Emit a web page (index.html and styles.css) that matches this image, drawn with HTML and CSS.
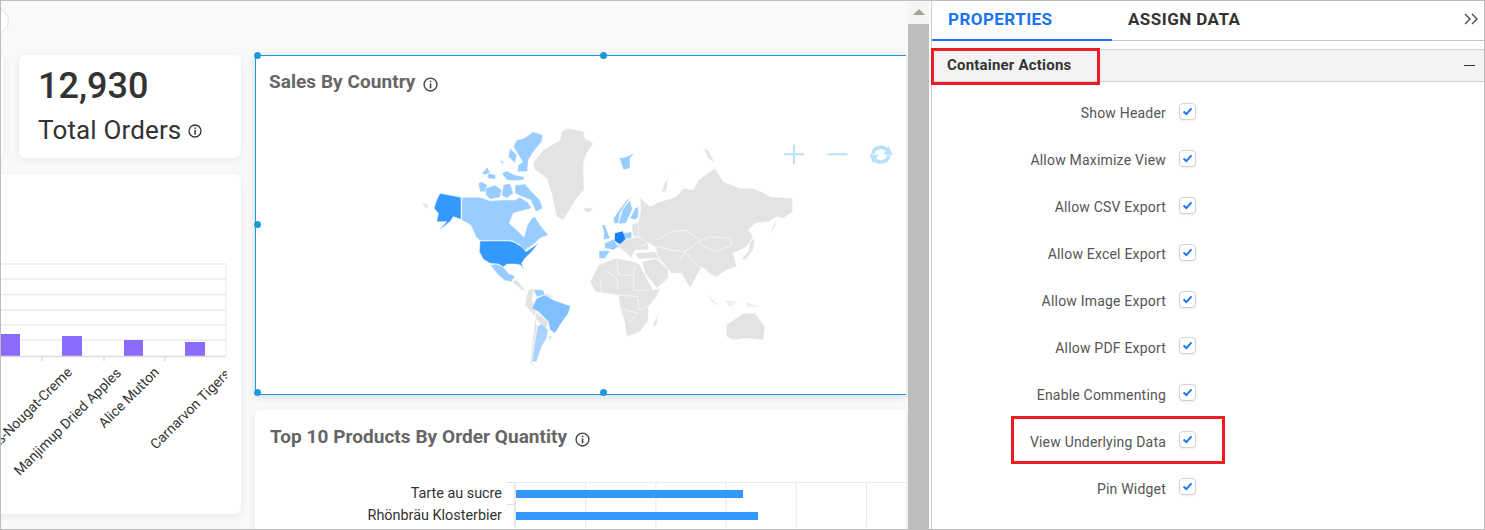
FILE: index.html
```html
<!DOCTYPE html>
<html lang="en">

<head>
  <meta charset="UTF-8">
  <title>Dashboard designer</title>
  <link rel="stylesheet" href="styles.css">
</head>

<body>
  <svg class="defs" width="0" height="0">
    <symbol id="info" viewBox="0 0 14 14">
      <circle cx="7" cy="7" r="6" fill="none" stroke="currentColor" stroke-width="1.3" />
      <rect x="6.3" y="6" width="1.5" height="4.6" fill="currentColor" />
      <rect x="6.3" y="3.4" width="1.5" height="1.5" fill="currentColor" />
    </symbol>
    <symbol id="tick" viewBox="0 0 17 17">
      <path d="M4 8.600 L7.200 11.400 L13 5" fill="none" stroke="#1a73f0" stroke-width="2.200" />
    </symbol>
  </svg>

  <div class="app">
    <div class="canvas">
      <span class="zoom-knob"></span>

      <div class="col-left">
        <div class="kpi-row">
          <div class="card kpi-stub"></div>
          <div class="card kpi">
            <div class="kpi-value">12,930</div>
            <div class="kpi-label">Total Orders <svg class="info-sm"><use href="#info" /></svg></div>
          </div>
        </div>

        <div class="card column-card">
          <svg class="column-chart" width="227" height="240" viewBox="0 250 227 240">
            <g stroke="#eaeaea" stroke-width="1.5">
              <path d="M0 264H226M0 279H226M0 294.500H226M0 310H226M0 325H226M0 340H226" />
              <path d="M226 264V356" stroke-width="1" />
            </g>
            <g fill="#8a6bfd">
              <rect x="1" y="334" width="19" height="22" />
              <rect x="62" y="336" width="20" height="20" />
              <rect x="124" y="340" width="19" height="16" />
              <rect x="185" y="342" width="20" height="14" />
            </g>
            <path d="M0 356.500H226M42 356V361M104 356V361M165 356V361" stroke="#dcdcdc" stroke-width="1.500" fill="none" />
            <g class="axis-label">
              <text transform="translate(73 373) rotate(-45)" text-anchor="end">NuNuCa Nuß-Nougat-Creme</text>
              <text transform="translate(122 374) rotate(-45)" text-anchor="end">Manjimup Dried Apples</text>
              <text transform="translate(160 373) rotate(-45)" text-anchor="end">Alice Mutton</text>
              <text transform="translate(156 450) rotate(-45)">Carnarvon Tigers</text>
            </g>
          </svg>
        </div>
      </div>

      <div class="col-right">
        <div class="card widget widget-selected">
          <h2 class="widget-title">Sales By Country <svg class="info"><use href="#info" /></svg></h2>
          <svg class="map" width="500" height="270" viewBox="0 0 1500 810">
            <g fill="#e3e3e3" stroke="#fff" stroke-width="1.500" stroke-linejoin="round">
              <polygon points="505,55 550,65 555,85 580,100 560,130 550,160 552,240 530,265 490,330 470,320 462,285 455,250 440,205 405,180 398,160 430,120 480,90 485,65" />
              <polygon points="65,275 85,285 80,300" />
              <polygon points="550,295 580,292 570,307 555,305" />
              <polygon points="720,262 750,290 780,275 830,260 850,235 880,240 895,210 945,175 970,215 1020,235 1060,235 1115,260 1178,265 1178,305 1150,325 1130,320 1105,335 1065,340 1045,360 1060,380 1040,410 1000,430 1010,470 980,480 950,500 935,495 905,470 870,535 845,490 815,490 790,460 775,445 765,410 745,400 700,385 695,345 715,335 722,300" />
              <polygon points="648,395 672,388 715,380 745,400 745,420 705,420 695,440 705,455 680,430 660,415 648,410" />
              <polygon points="705,430 765,425 778,445 715,447" />
              <polygon points="725,455 770,445 805,480 805,505 770,535 735,490" />
              <polygon points="785,245 795,215 832,185 805,205 798,245" />
              <polygon points="910,115 925,120 945,160 925,145" />
              <polygon points="1108,375 1132,318 1125,350" />
              <polygon points="1050,395 1065,385 1060,420 1035,450 1025,445 1045,425" />
              <polygon points="570,515 595,465 645,445 705,455 720,465 735,495 760,540 780,535 770,560 745,590 745,630 720,665 680,680 675,640 660,590 655,555 615,550 585,545" />
              <polygon points="760,640 775,612 770,645 758,650" />
              <polygon points="978,645 1030,610 1065,610 1095,650 1090,690 1040,685 1000,690 980,680" />
              <polygon points="335,515 350,510 375,540 385,545 365,540" />
              <polygon points="385,540 400,535 400,555 395,570 410,595 405,620 375,585 378,565" />
              <polygon points="437,548 462,560 440,565" />
              <polygon points="410,605 445,635 440,655 420,640 405,625" />
              <polygon points="405,625 412,650 405,690 395,755 405,770 390,760 398,690" />
              <polygon points="445,675 458,680 448,692" />
            </g>
            <g fill="#eeeeee">
              <polygon points="925,555 945,575 960,590 935,575" />
              <polygon points="975,570 1010,575 990,590" />
              <polygon points="1040,575 1075,590 1040,590" />
            </g>
            <g fill="none" stroke="#fff" stroke-width="2">
              <polygon points="895,395 930,380 990,385 995,405 950,425 910,410" />
              <path d="M770 390 815 365 855 360 900 390M770 410 815 420 855 425 905 480M840 450 855 425M855 425 895 395" />
              <path d="M615 480 650 505 655 540M650 450 655 495 700 495 705 465M700 495 700 540 745 540M655 555 715 560 715 600 745 590M675 600 715 610 685 640M600 505 605 550" />
              <path d="M700 385 715 380 715 335M745 400 720 410" />
            </g>
            <g fill="#99ccff" stroke="#fff" stroke-width="1.500" stroke-linejoin="round">
              <polygon points="400,65 428,75 425,95 400,125 385,150 382,185 352,185 355,165 368,155 340,110 350,90 372,85" />
              <polygon points="330,115 350,135 345,160 325,140" />
              <polygon points="185,262 240,262 270,272 300,270 345,270 360,262 385,278 395,295 375,300 340,310 328,340 350,360 372,382 382,345 395,325 405,320 420,345 445,375 420,385 405,400 370,425 360,405 335,392 240,392 228,380 212,345 185,330" />
              <polygon points="245,190 262,172 270,188 255,195" />
              <polygon points="265,190 288,195 285,208 262,205" />
              <polygon points="235,220 245,215 262,225 255,245 240,245" />
              <polygon points="255,235 285,225 305,240 300,262 270,268 258,255" />
              <polygon points="310,225 330,220 340,250 320,265 305,255" />
              <polygon points="305,190 320,183 345,195 372,200 372,210 340,212 320,210" />
              <polygon points="345,225 375,222 395,245 420,270 428,295 408,305 392,270 370,262 345,250" />
              <polygon points="298,150 310,155 310,165" />
              <polygon points="658,145 680,140 705,128 690,145 690,175 670,180" />
              <polygon points="270,465 290,462 310,470 325,490 345,498 335,515 315,512 295,495" />
              <polygon points="400,538 430,540 435,555 410,560" />
              <polygon points="667,370 695,365 695,385 670,388" />
              <polygon points="613,400 640,388 655,410 640,420 615,415" />
              <polygon points="655,342 668,298 690,270 697,298 678,340" />
              <polygon points="640,325 680,270 713,252 685,270 660,310 655,340 642,340" />
              <polygon points="690,325 705,295 715,290 715,320 705,330" />
              <polygon points="605,345 615,345 630,385 610,390 612,368" />
              <polygon points="597,422 630,422 615,445 597,445" />
            </g>
            <polygon points="425,640 445,660 440,685 425,710 410,755 395,755 405,690 412,650" fill="#aad4ff" stroke="#fff" stroke-width="1.500" />
            <polygon points="410,565 435,555 460,570 512,588 505,610 480,645 465,670 450,660 445,635 415,605 395,595" fill="#80bfff" stroke="#fff" stroke-width="1.500" />
            <g fill="#3399ff" stroke="#fff" stroke-width="1.500" stroke-linejoin="round">
              <polygon points="120,250 183,262 183,328 160,320 150,335 115,362 140,335 110,335 115,310 102,295 110,270" />
              <polygon points="240,393 330,393 345,398 365,410 378,425 415,400 395,425 385,435 375,445 365,460 372,482 362,465 345,462 322,462 310,470 295,462 270,460 250,448 238,425" />
            </g>
            <polygon points="645,370 668,364 676,388 660,402 644,392" fill="#1a80f0" />
            <g fill="none" stroke="#b8e2fb" stroke-width="6">
              <path d="M1152 133H1212M1182 104V162M1282 133H1342" />
              <path d="M1419 132A24 21 0 0 1 1460 118M1466 136A24 21 0 0 1 1425 150" stroke-width="11" />
              <path d="M1450 134H1478L1466 108ZM1408 134H1436L1420 160Z" fill="#b8e2fb" stroke="none" />
            </g>
          </svg>
          <i class="handle handle-tl"></i>
          <i class="handle handle-tc"></i>
          <i class="handle handle-ml"></i>
          <i class="handle handle-bl"></i>
          <i class="handle handle-bc"></i>
        </div>

        <div class="card widget widget-bars">
          <h2 class="widget-title">Top 10 Products By Order Quantity <svg class="info"><use href="#info" /></svg></h2>
          <div class="bar-chart">
            <div class="bar-row">
              <span class="bar-name">Tarte au sucre</span>
              <div class="bar-track"><div class="bar" style="width: 227px"></div></div>
            </div>
            <div class="bar-row">
              <span class="bar-name">Rhönbräu Klosterbier</span>
              <div class="bar-track"><div class="bar" style="width: 242px"></div></div>
            </div>
          </div>
        </div>
      </div>
    </div>

    <div class="scroller">
      <div class="scroller-up"><span></span></div>
      <div class="scroller-thumb"></div>
    </div>

    <div class="panel">
      <div class="tabs">
        <div class="tab tab-active">PROPERTIES</div>
        <div class="tab">ASSIGN DATA</div>
        <svg class="tabs-collapse" width="14" height="12" viewBox="0 0 14 12">
          <path d="M1 1 6 6 1 11M8 1 13 6 8 11" fill="none" stroke="#444" stroke-width="1.300" />
        </svg>
      </div>

      <div class="section-head">
        <span>Container Actions</span>
        <i class="section-minus"></i>
      </div>

      <div class="options">
        <label class="option"><span>Show Header</span><svg class="check"><use href="#tick" /></svg></label>
        <label class="option"><span>Allow Maximize View</span><svg class="check"><use href="#tick" /></svg></label>
        <label class="option"><span>Allow CSV Export</span><svg class="check"><use href="#tick" /></svg></label>
        <label class="option"><span>Allow Excel Export</span><svg class="check"><use href="#tick" /></svg></label>
        <label class="option"><span>Allow Image Export</span><svg class="check"><use href="#tick" /></svg></label>
        <label class="option"><span>Allow PDF Export</span><svg class="check"><use href="#tick" /></svg></label>
        <label class="option"><span>Enable Commenting</span><svg class="check"><use href="#tick" /></svg></label>
        <label class="option"><span>View Underlying Data</span><svg class="check"><use href="#tick" /></svg></label>
        <label class="option"><span>Pin Widget</span><svg class="check"><use href="#tick" /></svg></label>
      </div>

      <div class="callout callout-head"></div>
      <div class="callout callout-row"></div>
    </div>
  </div>
</body>

</html>
```

FILE: styles.css
```css
* {
  box-sizing: border-box;
}

body {
  margin: 0;
  font-family: Roboto, "Liberation Sans", sans-serif;
  background: #fff;
}

.defs {
  position: absolute;
}

.app {
  display: flex;
  width: 1485px;
  height: 530px;
  border: 1px solid #bdbdbd;
  overflow: hidden;
}

/* left side, the dashboard being edited */
.canvas {
  position: relative;
  display: flex;
  gap: 14px;
  flex: none;
  width: 907px;
  padding-top: 54px;
  background: #f9f9f9;
  overflow: hidden;
}

.zoom-knob {
  position: absolute;
  left: -18px;
  top: 7px;
  width: 26px;
  height: 26px;
  border-radius: 50%;
  background: #fff;
  border: 1px solid #e4e4e4;
}

.card {
  background: #fff;
  border-radius: 6px;
  box-shadow: 0 2px 8px rgba(0, 0, 0, 0.07);
}

.col-left {
  display: flex;
  flex-direction: column;
  gap: 16px;
  flex: none;
  width: 240px;
}

.kpi-row {
  display: flex;
  gap: 16px;
  justify-content: flex-end;
}

.kpi-stub {
  flex: none;
  width: 40px;
  height: 103px;
}

.kpi {
  flex: none;
  width: 222px;
  height: 103px;
  padding: 9px 0 0 19px;
  color: #333;
}

.kpi-value {
  font-size: 36px;
  line-height: 44px;
  font-weight: 500;
}

.kpi-label {
  display: flex;
  align-items: center;
  gap: 7px;
  margin-top: 7px;
  font-size: 26px;
  line-height: 30px;
  letter-spacing: 0.15px;
}

.info-sm {
  width: 14px;
  height: 14px;
  margin-top: 2px;
  color: #333;
}

.column-card {
  width: 250px;
  height: 340px;
  margin-left: -10px;
  overflow: hidden;
}

.column-chart {
  display: block;
  margin: 76px 0 0 9px;
}

.axis-label {
  font-size: 14px;
  fill: #333;
}

.col-right {
  display: flex;
  flex-direction: column;
  gap: 15px;
  flex: none;
  width: 651px;
}

.widget {
  position: relative;
  flex: none;
  padding: 14px 0 0 13px;
}

.widget-selected {
  height: 340px;
  border: 1px solid #1b9ad8;
  border-right: 0;
  border-radius: 0;
  box-shadow: 0 2px 8px rgba(0, 0, 0, 0.12);
}

.widget-bars {
  height: 200px;
  padding: 15px 0 0 15px;
  border-radius: 6px 0 0 6px;
}

.widget-title {
  display: flex;
  align-items: center;
  gap: 8px;
  margin: 0;
  font-size: 19px;
  line-height: 24px;
  font-weight: 700;
  letter-spacing: 0.05px;
  color: #666;
}

.info {
  width: 15px;
  height: 15px;
  margin-top: 4px;
  color: #444;
}

.map {
  display: block;
  margin: 16px 0 0 131px;
}

.handle {
  position: absolute;
  width: 7px;
  height: 7px;
  border-radius: 50%;
  background: #1b9ad8;
}

.handle-tl { left: -2px; top: -4px; }
.handle-tc { left: 344px; top: -4px; }
.handle-ml { left: -2px; top: 165px; }
.handle-bl { left: -2px; top: 333px; }
.handle-bc { left: 344px; top: 333px; }

.bar-chart {
  display: flex;
  flex-direction: column;
  margin: 34px 0 0 -15px;
}

.bar-row {
  display: flex;
  height: 22px;
  align-items: stretch;
}

.bar-row:first-child .bar-track {
  box-shadow: 0 -1px 0 #ececec;
}

.bar-name {
  flex: none;
  width: 247px;
  text-align: right;
  font-size: 14.400px;
  line-height: 22px;
  color: #333;
  white-space: nowrap;
}

.bar-track {
  position: relative;
  display: flex;
  align-items: center;
  flex: none;
  width: 396px;
  margin-left: 12px;
  border-left: 2px solid #e8e8e8;
  background: repeating-linear-gradient(90deg, transparent 0, transparent 69px, #e8e8e8 69px, #e8e8e8 71px);
  background-size: 70.200px 100%;
}

/* axis tick left of each category */
.bar-track::before {
  content: "";
  position: absolute;
  left: -9px;
  top: -1px;
  width: 7px;
  height: 1px;
  background: #e0e0e0;
}

.bar {
  height: 8px;
  background: #3399ff;
}

/* scrollbar between canvas and panel */
.scroller {
  flex: none;
  width: 23px;
  background: #f4f4f4;
  border-right: 2px solid #fff;
}

.scroller-up {
  display: flex;
  justify-content: center;
  padding-top: 8px;
  height: 23px;
}

.scroller-up span {
  width: 0;
  height: 0;
  border-left: 6px solid transparent;
  border-right: 6px solid transparent;
  border-bottom: 6px solid #a8a295;
}

.scroller-thumb {
  height: 520px;
  background: #bdbdbd;
}

/* right side, properties */
.panel {
  position: relative;
  flex: 1;
  border-left: 1px solid #d0d0d0;
}

.tabs {
  display: flex;
  align-items: center;
  height: 40px;
  border-bottom: 1px solid #c8c8c8;
}

.tab {
  width: 180px;
  height: 40px;
  padding-left: 16px;
  font-size: 17px;
  line-height: 37px;
  font-weight: 700;
  letter-spacing: 0.45px;
  color: #333;
}

.tab-active {
  color: #1a73f0;
  border-bottom: 2px solid #1a73f0;
}

.tabs-collapse {
  margin-left: auto;
  margin-right: 6px;
  margin-top: -3px;
}

.section-head {
  display: flex;
  align-items: center;
  justify-content: space-between;
  height: 33px;
  margin-top: 8px;
  padding: 0 9px 1px 15px;
  background: #f3f3f3;
  border-top: 1px solid #d4d4d4;
  border-bottom: 1px solid #d4d4d4;
  font-size: 15px;
  letter-spacing: 0.2px;
  font-weight: 700;
  color: #333;
}

.section-minus {
  width: 11px;
  height: 1px;
  background: #333;
}

.options {
  display: flex;
  flex-direction: column;
  padding-top: 7px;
}

.option {
  display: flex;
  align-items: center;
  gap: 13px;
  height: 46.900px;
}

.option span {
  width: 234px;
  padding-top: 2px;
  text-align: right;
  font-size: 14px;
  letter-spacing: 0.2px;
  color: #555;
}

.check {
  flex: none;
  width: 17px;
  height: 17px;
  margin-top: -2px;
  background: #fff;
  border: 1px solid #d2d2d2;
  border-radius: 4px;
  box-shadow: 0 1px 2px rgba(0, 0, 0, 0.08);
}

.callout {
  position: absolute;
  border: 3px solid #ed1c24;
}

.callout-head {
  left: -1px;
  top: 47px;
  width: 169px;
  height: 37px;
}

.callout-row {
  left: 79px;
  top: 415px;
  width: 214px;
  height: 48px;
}
```
